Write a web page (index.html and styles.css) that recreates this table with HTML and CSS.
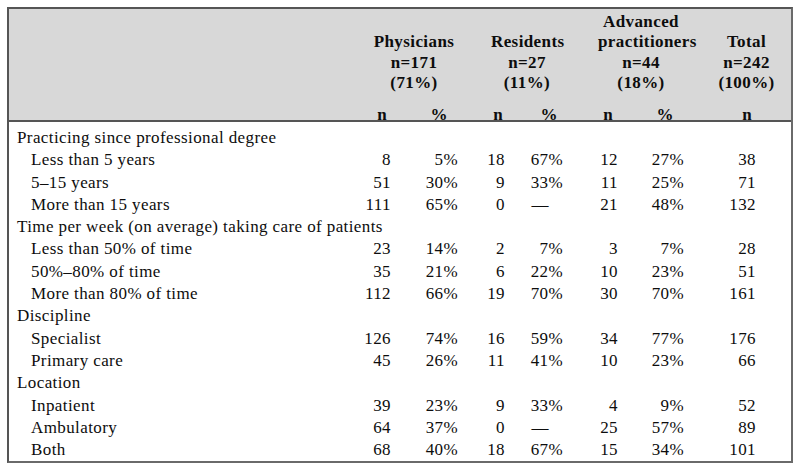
FILE: index.html
```html
<!DOCTYPE html>
<html>
<head>
<meta charset="utf-8">
<link rel="stylesheet" href="styles.css">
</head>
<body>
<div class="table">
  <div class="head">
    <div class="grp g-phys">Physicians<br>n=171<br>(71%)</div>
    <div class="grp g-res">Residents<br>n=27<br>(11%)</div>
    <div class="grp g-adv">Advanced<br>practitioners<br>n=44<br>(18%)</div>
    <div class="grp g-tot">Total<br>n=242<br>(100%)</div>
    <div class="sub c-label"></div>
    <div class="sub s-pn">n</div>
    <div class="sub s-pp">%</div>
    <div class="sub s-rn">n</div>
    <div class="sub s-rp">%</div>
    <div class="sub s-an">n</div>
    <div class="sub s-ap">%</div>
    <div class="sub s-tn">n</div>
    <div class="sub"></div>
  </div>
  <div class="body">
    <div class="row sec"><span class="lbl">Practicing since professional degree</span></div>
    <div class="row"><span class="lbl">Less than 5 years</span><span>8</span><span>5%</span><span>18</span><span>67%</span><span>12</span><span>27%</span><span>38</span></div>
    <div class="row"><span class="lbl">5–15 years</span><span>51</span><span>30%</span><span>9</span><span>33%</span><span>11</span><span>25%</span><span>71</span></div>
    <div class="row"><span class="lbl">More than 15 years</span><span>111</span><span>65%</span><span>0</span><span class="dash">—</span><span>21</span><span>48%</span><span>132</span></div>
    <div class="row sec"><span class="lbl">Time per week (on average) taking care of patients</span></div>
    <div class="row"><span class="lbl">Less than 50% of time</span><span>23</span><span>14%</span><span>2</span><span>7%</span><span>3</span><span>7%</span><span>28</span></div>
    <div class="row"><span class="lbl">50%–80% of time</span><span>35</span><span>21%</span><span>6</span><span>22%</span><span>10</span><span>23%</span><span>51</span></div>
    <div class="row"><span class="lbl">More than 80% of time</span><span>112</span><span>66%</span><span>19</span><span>70%</span><span>30</span><span>70%</span><span>161</span></div>
    <div class="row sec"><span class="lbl">Discipline</span></div>
    <div class="row"><span class="lbl">Specialist</span><span>126</span><span>74%</span><span>16</span><span>59%</span><span>34</span><span>77%</span><span>176</span></div>
    <div class="row"><span class="lbl">Primary care</span><span>45</span><span>26%</span><span>11</span><span>41%</span><span>10</span><span>23%</span><span>66</span></div>
    <div class="row sec"><span class="lbl">Location</span></div>
    <div class="row"><span class="lbl">Inpatient</span><span>39</span><span>23%</span><span>9</span><span>33%</span><span>4</span><span>9%</span><span>52</span></div>
    <div class="row"><span class="lbl">Ambulatory</span><span>64</span><span>37%</span><span>0</span><span class="dash">—</span><span>25</span><span>57%</span><span>89</span></div>
    <div class="row"><span class="lbl">Both</span><span>68</span><span>40%</span><span>18</span><span>67%</span><span>15</span><span>34%</span><span>101</span></div>
  </div>
</div>
</body>
</html>
```

FILE: styles.css
```css
html, body {
  margin: 0;
  padding: 0;
  background: #ffffff;
}
body {
  padding: 7px 0 0 7px;
  font-family: "Liberation Serif", "Times New Roman", serif;
  font-size: 17px;
  letter-spacing: 0.4px;
  color: #0d0d0d;
}
.table {
  width: 786px;
  box-sizing: border-box;
  border: 2px solid #555;
  border-right-color: #6a6a6a;
  border-bottom-color: #6a6a6a;
}
.head,
.row {
  display: grid;
  grid-template-columns: 331px 51px 67px 47px 58px 55px 66px 72px 35px;
}
.head {
  background: #d8d8d8;
  height: 113px;
  box-sizing: border-box;
  padding-top: 3.1px;
  grid-template-rows: 81.2px 28.7px;
  border-bottom: 2px solid #555;
  font-weight: bold;
}
.grp {
  line-height: 20.3px;
  text-align: center;
  align-self: end;
  grid-row: 1;
}
.g-phys { grid-column: 2 / 4; padding-left: 30px; }
.g-res { grid-column: 4 / 6; padding-left: 33px; }
.g-adv { grid-column: 6 / 8; padding-left: 35px; }
.g-tot { grid-column: 8 / 10; padding-left: 18px; }
.sub {
  grid-row: 2;
  line-height: 14px;
  padding-top: 15px;
  text-align: right;
}
.s-pn { padding-right: 4px; }
.s-pp { padding-right: 10px; }
.s-rn { padding-right: 2px; }
.s-rp { padding-right: 5px; }
.s-an { padding-right: 5px; }
.s-ap { padding-right: 10px; }
.s-tn { padding-right: 4px; }
.body {
  padding: 5px 0 0;
}
.row {
  height: 22.3px;
  line-height: 22.3px;
  white-space: nowrap;
}
.row span {
  text-align: right;
}
.row .lbl {
  text-align: left;
  padding-left: 22px;
}
.row.sec .lbl {
  padding-left: 8px;
  grid-column: 1 / 10;
}
.row .dash {
  padding-right: 14px;
}
```
